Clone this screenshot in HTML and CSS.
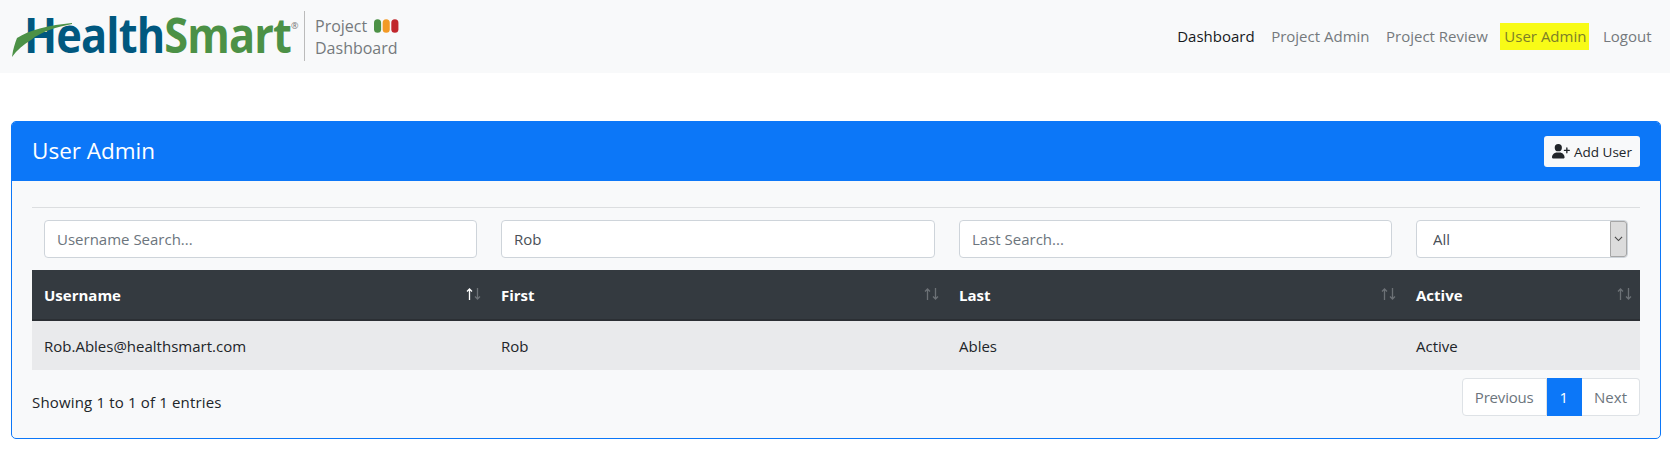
FILE: index.html
```html
<!DOCTYPE html>
<html lang="en">
<head>
<meta charset="utf-8">
<title>User Admin</title>
<link rel="stylesheet" href="styles.css">
</head>
<body>
<nav class="navbar">
  <a class="brand" href="#">
    <span class="logo">
      <span class="logo-word"><span class="logo-blue">Health</span><span class="logo-green">Smart</span></span>
      <span class="logo-reg">®</span>
      <svg class="logo-leaf" viewBox="0 0 60 35" aria-hidden="true"><path d="M0 34 C1 26 3 20 5 15 C17 7 38 2 60 0 L60 1 C45 4 30 8 19 17 C11 22 5 27 0 34Z" fill="#4c9146"/></svg>
    </span>
    <span class="brand-sep"></span>
    <span class="brand-sub">
      <span class="brand-line">Project
        <svg class="lights" viewBox="0 0 26 14" aria-hidden="true">
          <rect x="0" y="0" width="7.4" height="14" rx="3.7" fill="#4c9146"/>
          <rect x="9" y="0" width="7.4" height="14" rx="3.7" fill="#f39a26"/>
          <rect x="18" y="0" width="7.4" height="14" rx="3.7" fill="#c1272d"/>
        </svg>
      </span>
      <span class="brand-line">Dashboard</span>
    </span>
  </a>
  <ul class="nav-links">
    <li><a class="nav-link active" href="#">Dashboard</a></li>
    <li><a class="nav-link" href="#">Project Admin</a></li>
    <li><a class="nav-link" href="#">Project Review</a></li>
    <li><a class="nav-link highlight" href="#">User Admin</a></li>
    <li><a class="nav-link" href="#">Logout</a></li>
  </ul>
</nav>

<main class="card">
  <header class="card-header">
    <h1 class="card-title">User Admin</h1>
    <button class="btn-add" type="button">
      <svg class="btn-icon" viewBox="0 0 640 512" aria-hidden="true"><path d="M224 256a128 128 0 1 0 0-256 128 128 0 1 0 0 256zm-45.700 48C79.800 304 0 383.800 0 482.300 0 498.700 13.300 512 29.700 512h388.600c16.400 0 29.700-13.300 29.700-29.700 0-98.500-79.800-178.300-178.300-178.300h-91.400zM504 312v-64h-64c-13.300 0-24-10.700-24-24s10.700-24 24-24h64v-64c0-13.300 10.700-24 24-24s24 10.700 24 24v64h64c13.300 0 24 10.700 24 24s-10.700 24-24 24h-64v64c0 13.300-10.700 24-24 24s-24-10.700-24-24z" fill="#212529"/></svg>
      Add User
    </button>
  </header>
  <section class="card-body">
    <hr class="rule">
    <div class="filters">
      <div class="filter"><input class="field" type="text" placeholder="Username Search..."></div>
      <div class="filter"><input class="field" type="text" value="Rob"></div>
      <div class="filter"><input class="field" type="text" placeholder="Last Search..."></div>
      <div class="filter">
        <div class="select-wrap">
          <select class="field select"><option>All</option></select>
          <span class="select-arrow"><svg viewBox="0 0 10 6" aria-hidden="true"><path d="M1 1l4 4 4-4" fill="none" stroke="#444" stroke-width="1.200"/></svg></span>
        </div>
      </div>
    </div>
    <table class="table">
      <thead>
        <tr>
          <th>Username<span class="sort"><svg class="arrow on" viewBox="0 0 7 12" aria-hidden="true"><path d="M3.500 12V1M1 3.500L3.500 1 6 3.500"/></svg><svg class="arrow" viewBox="0 0 7 12" aria-hidden="true"><path d="M3.500 0V11M1 8.500L3.500 11 6 8.500"/></svg></span></th>
          <th>First<span class="sort"><svg class="arrow" viewBox="0 0 7 12" aria-hidden="true"><path d="M3.500 12V1M1 3.500L3.500 1 6 3.500"/></svg><svg class="arrow" viewBox="0 0 7 12" aria-hidden="true"><path d="M3.500 0V11M1 8.500L3.500 11 6 8.500"/></svg></span></th>
          <th>Last<span class="sort"><svg class="arrow" viewBox="0 0 7 12" aria-hidden="true"><path d="M3.500 12V1M1 3.500L3.500 1 6 3.500"/></svg><svg class="arrow" viewBox="0 0 7 12" aria-hidden="true"><path d="M3.500 0V11M1 8.500L3.500 11 6 8.500"/></svg></span></th>
          <th>Active<span class="sort"><svg class="arrow" viewBox="0 0 7 12" aria-hidden="true"><path d="M3.500 12V1M1 3.500L3.500 1 6 3.500"/></svg><svg class="arrow" viewBox="0 0 7 12" aria-hidden="true"><path d="M3.500 0V11M1 8.500L3.500 11 6 8.500"/></svg></span></th>
        </tr>
      </thead>
      <tbody>
        <tr>
          <td>Rob.Ables@healthsmart.com</td>
          <td>Rob</td>
          <td>Ables</td>
          <td>Active</td>
        </tr>
      </tbody>
    </table>
    <div class="table-foot">
      <div class="info">Showing 1 to 1 of 1 entries</div>
      <ul class="pagination">
        <li><a class="page prev" href="#">Previous</a></li>
        <li><a class="page current" href="#">1</a></li>
        <li><a class="page" href="#">Next</a></li>
      </ul>
    </div>
  </section>
</main>
</body>
</html>
```
FILE: styles.css
```css
* { box-sizing: border-box; }
body {
  margin: 0;
  background: #fff;
  color: #212529;
  font-family: "Open Sans", "Noto Sans", sans-serif;
  font-size: 15px;
  line-height: 1.5;
}
a { text-decoration: none; }
ul { list-style: none; margin: 0; padding: 0; }

.navbar {
  height: 73px;
  background: #f8f9fa;
  display: flex;
  align-items: center;
  justify-content: space-between;
  padding: 0 12px;
}
.brand { display: flex; align-items: center; }
.logo {
  position: relative;
  display: block;
  width: 287px;
  height: 50px;
}
.logo-word {
  display: block;
  margin: -3px 0 0 12px;
  width: 312px;
  font-family: "Open Sans", sans-serif;
  font-weight: 700;
  font-size: 49px;
  line-height: 50px;
  letter-spacing: -1px;
  white-space: nowrap;
  transform: scaleX(.885);
  transform-origin: left top;
}
.logo-blue { color: #00587f; }
.logo-green { color: #4c9146; }
.logo-reg { position: absolute; left: 279px; top: 9px; color: #777; font-size: 9px; line-height: 1; }
.logo-leaf { position: absolute; left: 0; top: 11px; width: 60px; height: 35px; }
.brand-sep { width: 1px; height: 50px; background: #bbb; margin: -2px 10px 0 5px; }
.brand-sub {
  display: flex;
  flex-direction: column;
  color: #75797d;
  font-family: "Open Sans", sans-serif;
  font-size: 16px;
  line-height: 22px;
}
.brand-line { display: flex; align-items: center; gap: 7px; }
.lights { width: 25px; height: 14px; }

.nav-links { display: flex; align-items: center; gap: 9.500px; padding-right: 3.500px; }
.nav-link { display: block; padding: 0 3px 0 4px; color: #75797d; font-size: 15px; line-height: 27px; }
.nav-link.active { color: #16191c; }
.nav-link.highlight { background: #f8fb17; color: #7d7f28; }

.card {
  margin: 48px 9px 0 11px;
  height: 318px;
  border: 1px solid #0c77f8;
  border-radius: 5px;
  background: #f8f9fa;
  overflow: hidden;
}
.card-header {
  height: 59px;
  background: #0c77f8;
  display: flex;
  align-items: center;
  justify-content: space-between;
  padding: 0 20px 0 21px;
}
.card-title { margin: 0 0 2px -1px; color: #fff; font-size: 22.500px; font-weight: 400; }
.btn-add {
  display: flex;
  align-items: center;
  gap: 4px;
  width: 96px;
  height: 31px;
  padding: 0 8px;
  border: 0;
  border-radius: 3px;
  background: #f8f9fa;
  color: #212529;
  font-family: inherit;
  font-size: 13.500px;
  white-space: nowrap;
}
.btn-icon { flex: none; width: 18px; height: 14.500px; }
.card-body { padding: 26px 20px 0; }
.rule { margin: 0; border: 0; border-top: 1px solid #dcdee0; }
.filters {
  display: grid;
  grid-template-columns: 457px 458px 457px 236px;
  margin-top: 12px;
}
.filter { padding: 0 12px; }
.field {
  display: block;
  width: 100%;
  height: 38px;
  padding: 0 12px;
  border: 1px solid #ced4da;
  border-radius: 4px;
  background: #fff;
  color: #495057;
  font-family: inherit;
  font-size: 15px;
}
.field::placeholder { color: #6c757d; opacity: 1; }
.select-wrap { position: relative; }
.select { appearance: none; padding-left: 16px; }
.select-arrow {
  position: absolute;
  top: 1px;
  right: 1px;
  bottom: 1px;
  width: 17px;
  background: #dcdcdc;
  border: 1px solid #a6a6a6;
  border-radius: 0 3px 3px 0;
  display: flex;
  align-items: center;
  justify-content: center;
  pointer-events: none;
}
.select-arrow svg { width: 9px; height: 5.500px; }

.table {
  width: 100%;
  margin-top: 12px;
  border-collapse: separate;
  border-spacing: 0;
  table-layout: fixed;
}
.table th:nth-child(1), .table td:nth-child(1) { width: 457px; }
.table th:nth-child(2), .table td:nth-child(2) { width: 458px; }
.table th:nth-child(3), .table td:nth-child(3) { width: 457px; }
.table th {
  position: relative;
  height: 51px;
  padding: 2px 12px 0;
  background: #343a40;
  border-bottom: 2px solid #2b2f34;
  color: #fff;
  text-align: left;
  font-size: 15px;
  font-weight: 700;
}
.table td {
  height: 49px;
  padding: 2px 12px 0;
  background: #e9eaec;
  color: #212529;
  font-size: 15px;
}
.sort {
  position: absolute;
  top: 18px;
  right: 8px;
  display: flex;
  gap: 1px;
}
.arrow {
  display: block;
  width: 7px;
  height: 12px;
  fill: none;
  stroke: #6c7176;
  stroke-width: 1.300;
}
.arrow.on { stroke: #fff; }

.table-foot {
  display: flex;
  align-items: flex-start;
  justify-content: space-between;
  margin-top: 8px;
}
.info { margin-top: 13px; font-size: 15px; line-height: 22px; letter-spacing: .16px; }
.pagination { display: flex; }
.page {
  display: block;
  height: 38px;
  padding: 0 12px;
  background: #fff;
  border: 1px solid #dee2e6;
  border-left-width: 0;
  color: #6c757d;
  font-size: 15px;
  line-height: 36px;
}
.page.prev { letter-spacing: -.2px; }
.pagination li:first-child .page { border-left-width: 1px; border-radius: 4px 0 0 4px; }
.pagination li:last-child .page { border-radius: 0 4px 4px 0; }
.page.current { padding: 0 13px; background: #0c77f8; border-color: #0c77f8; color: #fff; }
```
